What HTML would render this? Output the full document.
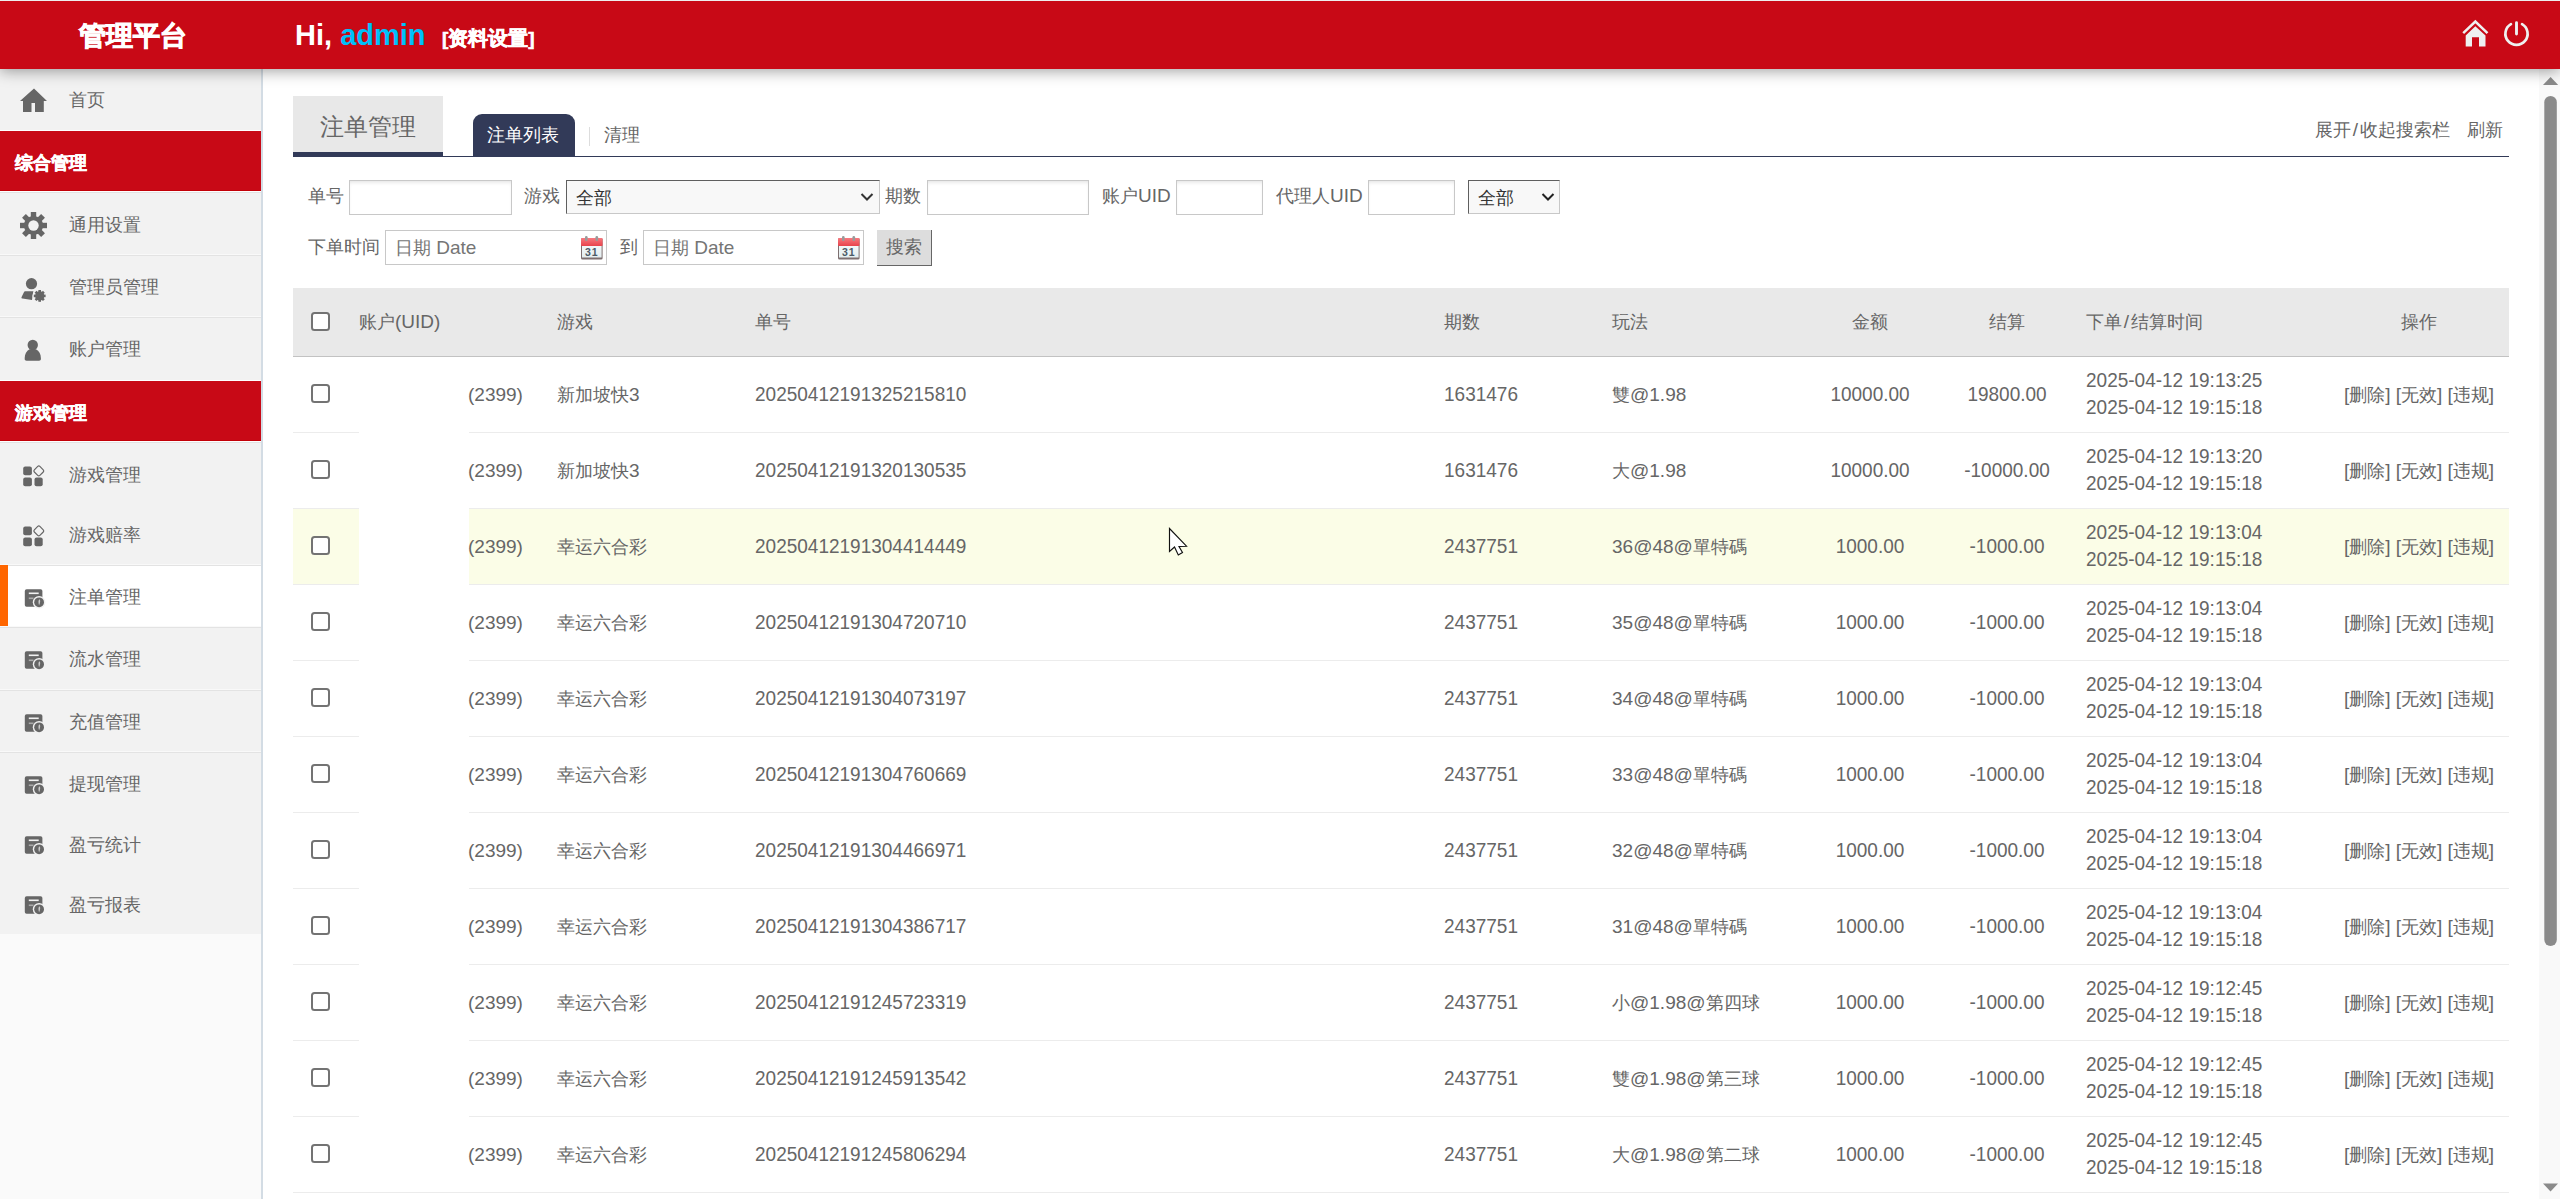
<!DOCTYPE html>
<html><head><meta charset="utf-8">
<style>
*{box-sizing:border-box;margin:0;padding:0}
html,body{width:2560px;height:1199px;overflow:hidden;background:#fff;font-family:"Liberation Sans",sans-serif;color:#666}
.a{position:absolute;white-space:nowrap}
svg{display:block}
#top{position:absolute;left:0;top:0;width:2560px;height:69px;background:#c80916;border-top:1px solid #eee;box-shadow:0 2px 14px rgba(0,0,0,.38);z-index:5}
#side{position:absolute;left:0;top:69px;width:261px;height:1130px;background:#fafafa}
#sideb{position:absolute;left:261px;top:69px;width:2px;height:1130px;background:#d3dce4;z-index:2}
.mi{position:absolute;left:0;width:261px;background:#f2f2f2;font-size:19.5px;color:#666}
.mi .t{position:absolute;left:69px}
.mi .ic{position:absolute}
.mh{position:absolute;left:0;width:261px;background:#c80916;color:#fff;font-weight:bold;font-size:19px}
.mh .t{position:absolute;left:15px;top:1.5px !important;-webkit-text-stroke:0.5px #fff}
.ln{position:absolute;left:0;width:261px;height:1px;background:#e2e2e2}
.wl{position:absolute;left:0;width:261px;height:1px;background:#fff}
.tx{font-size:19px;color:#666;line-height:27px}
.ctr{text-align:center}
.sy{transform:scaleY(1.075);transform-origin:0 20px}
.chk{position:absolute;width:19.4px;height:19.4px;border:2px solid #737373;border-radius:3.5px;background:#fff}
.inp{position:absolute;height:35px;border:1px solid #c8c8c8;background:#fff;box-shadow:inset 0 3px 4px -2px rgba(0,0,0,.13)}
.sel{position:absolute;height:34px;border:1px solid #c8c8c8;border-top:1.5px solid #5f5f5f;border-left:1.5px solid #5f5f5f;background:#f8f8f8}
</style></head><body>

<div id="top">
<div class="a" style="left:79px;top:17px;font-size:26.8px;font-weight:bold;color:#fff;line-height:36px;-webkit-text-stroke:0.9px #fff">管理平台</div>
<div class="a" style="left:295px;top:16px;font-size:29px;font-weight:bold;color:#fff;line-height:36px">Hi, <span style="color:#00c0fa">admin</span></div>
<div class="a" style="left:442px;top:22px;font-size:19px;font-weight:bold;color:#fff;line-height:30px;-webkit-text-stroke:0.6px #fff">[<span style="font-size:19.5px">资料设置</span>]</div>
<svg class="a" style="left:2455px;top:12px" width="80" height="40" viewBox="2455 12 80 40"><path d="M2463.2 32.2 L2475.35 20.6 L2487.5 32.2" stroke="#eef0f0" stroke-width="2.5" fill="none"/><path d="M2475.35 25.3 L2485.5 34.6 L2485.5 45.5 L2479 45.5 L2479 36.2 L2472 36.2 L2472 45.5 L2465.7 45.5 L2465.7 34.6 Z" fill="#eef0f0"/><path d="M2510.95 23.2 A11.1 11.1 0 1 0 2522.05 23.2" stroke="#eef0f0" stroke-width="2.7" fill="none" stroke-linecap="round"/><path d="M2516.5 21.6 L2516.5 33.0" stroke="#eef0f0" stroke-width="2.9" stroke-linecap="round"/></svg>
</div>
<div id="side"></div><div id="sideb"></div>
<div class="mi" style="top:69px;height:61px;background:#f2f2f2"><div class="ic" style="left:20px;top:19px"><svg width="28" height="26" viewBox="0 0 28 26"><path d="M14 0.5 L27 13 L23.8 13 L23.8 24 L15 24 L15 15 L11.5 15 L11.5 24 L3 24 L3 13 L0 13 Z" fill="#666"/></svg></div><div class="t" style="top:0;line-height:61px"><span style="font-size:18px">首页</span></div></div>
<div class="ln" style="top:130px;background:#fff"></div>
<div class="ln" style="top:190px;background:#c30008;z-index:1"></div>
<div class="mh" style="top:131px;height:60px"><div class="t" style="top:0;line-height:60px"><span style="font-size:18px">综合管理</span></div></div>
<div class="ln" style="top:191px;background:#fff"></div>
<div class="ln" style="top:192px;background:#e3e3e3"></div>
<div class="mi" style="top:193px;height:62px;background:#f2f2f2"><div class="ic" style="left:0px;top:0px"></div><div class="t" style="top:0;line-height:62px"></div></div>
<svg class="a" style="left:18px;top:210px" width="31" height="31" viewBox="18 210 31 31"><circle cx="33.5" cy="225.5" r="9.6" fill="#666"/><rect x="30.8" y="212.0" width="5.4" height="13.5" fill="#666" transform="rotate(0.0 33.5 225.5)"/><rect x="30.8" y="212.0" width="5.4" height="13.5" fill="#666" transform="rotate(45.0 33.5 225.5)"/><rect x="30.8" y="212.0" width="5.4" height="13.5" fill="#666" transform="rotate(90.0 33.5 225.5)"/><rect x="30.8" y="212.0" width="5.4" height="13.5" fill="#666" transform="rotate(135.0 33.5 225.5)"/><rect x="30.8" y="212.0" width="5.4" height="13.5" fill="#666" transform="rotate(180.0 33.5 225.5)"/><rect x="30.8" y="212.0" width="5.4" height="13.5" fill="#666" transform="rotate(225.0 33.5 225.5)"/><rect x="30.8" y="212.0" width="5.4" height="13.5" fill="#666" transform="rotate(270.0 33.5 225.5)"/><rect x="30.8" y="212.0" width="5.4" height="13.5" fill="#666" transform="rotate(315.0 33.5 225.5)"/><circle cx="33.5" cy="225.5" r="5.2" fill="#f2f2f2"/></svg>
<div class="ln" style="top:254px;background:#f9f9f9"></div>
<div class="ln" style="top:255px;background:#e3e3e3"></div>
<div class="mi" style="top:256px;height:61px;background:#f2f2f2"><div class="ic" style="left:0px;top:0px"></div><div class="t" style="top:0;line-height:61px"></div></div>
<svg class="a" style="left:18px;top:274px" width="30" height="30" viewBox="18 274 30 30"><circle cx="31.5" cy="283.7" r="5.6" fill="#666"/><path d="M25.5 291.2 L33.4 291.2 L32 300 L22.5 298.6 C21.5 298.4 21.3 297.8 21.6 297 L23.8 292.5 C24.2 291.6 24.7 291.2 25.5 291.2 Z" fill="#666"/><circle cx="39.7" cy="295.9" r="7.3" fill="#f2f2f2"/><circle cx="39.7" cy="295.9" r="4.6" fill="#666"/><rect x="38.400000000000006" y="290.0" width="2.6" height="5.9" fill="#666" transform="rotate(0.0 39.7 295.9)"/><rect x="38.400000000000006" y="290.0" width="2.6" height="5.9" fill="#666" transform="rotate(45.0 39.7 295.9)"/><rect x="38.400000000000006" y="290.0" width="2.6" height="5.9" fill="#666" transform="rotate(90.0 39.7 295.9)"/><rect x="38.400000000000006" y="290.0" width="2.6" height="5.9" fill="#666" transform="rotate(135.0 39.7 295.9)"/><rect x="38.400000000000006" y="290.0" width="2.6" height="5.9" fill="#666" transform="rotate(180.0 39.7 295.9)"/><rect x="38.400000000000006" y="290.0" width="2.6" height="5.9" fill="#666" transform="rotate(225.0 39.7 295.9)"/><rect x="38.400000000000006" y="290.0" width="2.6" height="5.9" fill="#666" transform="rotate(270.0 39.7 295.9)"/><rect x="38.400000000000006" y="290.0" width="2.6" height="5.9" fill="#666" transform="rotate(315.0 39.7 295.9)"/></svg>
<div class="ln" style="top:316px;background:#f9f9f9"></div>
<div class="ln" style="top:317px;background:#e3e3e3"></div>
<div class="mi" style="top:318px;height:62px;background:#f2f2f2"><div class="ic" style="left:0px;top:0px"></div><div class="t" style="top:0;line-height:62px"></div></div>
<svg class="a" style="left:20px;top:336px" width="26" height="28" viewBox="20 336 26 28"><circle cx="32.75" cy="345" r="5.2" fill="#666"/><path d="M29.5 349.3 L36 349.3 C39 351 40.9 354 40.9 358 L40.9 359 C40.9 360.2 40.2 360.7 39 360.7 L26.6 360.7 C25.4 360.7 24.7 360.2 24.7 359 L24.7 358 C24.7 354 26.5 351 29.5 349.3 Z" fill="#666"/></svg>
<div class="ln" style="top:380px;background:#fff"></div>
<div class="ln" style="top:440px;background:#c30008;z-index:1"></div>
<div class="mh" style="top:381px;height:60px"><div class="t" style="top:0;line-height:60px"><span style="font-size:18px">游戏管理</span></div></div>
<div class="ln" style="top:441px;background:#fff"></div>
<div class="ln" style="top:442px;background:#e3e3e3"></div>
<div class="mi" style="top:443px;height:121px;background:#f2f2f2"><div class="ic" style="left:0px;top:0px"></div><div class="t" style="top:0;line-height:121px"></div></div>
<svg class="a" style="left:20px;top:462px" width="26" height="28" viewBox="20 462 26 28"><rect x="23.2" y="466.4" width="8.7" height="8.9" rx="2" fill="#666"/><rect x="23.2" y="477.4" width="8.7" height="8.8" rx="2" fill="#666"/><rect x="34.5" y="477.4" width="8.2" height="8.8" rx="2" fill="#666"/><rect x="34.9" y="467.0" width="7.8" height="7.8" rx="1.5" fill="none" stroke="#666" stroke-width="1.2" transform="rotate(45 38.8 470.9)"/></svg>
<svg class="a" style="left:20px;top:522px" width="26" height="28" viewBox="20 522 26 28"><rect x="23.2" y="526.4" width="8.7" height="8.9" rx="2" fill="#666"/><rect x="23.2" y="537.4" width="8.7" height="8.8" rx="2" fill="#666"/><rect x="34.5" y="537.4" width="8.2" height="8.8" rx="2" fill="#666"/><rect x="34.9" y="527.0" width="7.8" height="7.8" rx="1.5" fill="none" stroke="#666" stroke-width="1.2" transform="rotate(45 38.8 530.9)"/></svg>
<div class="ln" style="top:564px;background:#f9f9f9"></div>
<div class="ln" style="top:565px;background:#e3e3e3"></div>
<div class="mi" style="top:566px;height:61px;background:#fff"><div class="ic" style="left:0px;top:0px"></div><div class="t" style="top:0;line-height:61px"></div></div>
<div class="a" style="left:0;top:565px;width:8px;height:61px;background:#ff6600"></div>
<div class="ln" style="top:626px;background:#f9f9f9"></div>
<div class="ln" style="top:627px;background:#e3e3e3"></div>
<div class="mi" style="top:628px;height:62px;background:#f2f2f2"><div class="ic" style="left:0px;top:0px"></div><div class="t" style="top:0;line-height:62px"></div></div>
<div class="ln" style="top:689px;background:#f9f9f9"></div>
<div class="ln" style="top:690px;background:#e3e3e3"></div>
<div class="mi" style="top:691px;height:61px;background:#f2f2f2"><div class="ic" style="left:0px;top:0px"></div><div class="t" style="top:0;line-height:61px"></div></div>
<div class="ln" style="top:751px;background:#f9f9f9"></div>
<div class="ln" style="top:752px;background:#e3e3e3"></div>
<div class="mi" style="top:753px;height:181px;background:#f2f2f2"><div class="ic" style="left:0px;top:0px"></div><div class="t" style="top:0;line-height:181px"></div></div>
<svg class="a" style="left:22px;top:586px" width="24" height="24" viewBox="22 586 24 24"><rect x="24.8" y="589.3" width="17.6" height="17.5" rx="1.8" fill="#666"/><rect x="28.8" y="592.5" width="9.9" height="1.6" fill="#f2f2f2"/><rect x="28.8" y="597.5" width="4.7" height="1.6" fill="#aaa"/><circle cx="39.1" cy="602.3" r="6.3" fill="#f2f2f2"/><circle cx="39.1" cy="602.3" r="4.9" fill="#666"/><path d="M39.4 599.3 C40.6 599.8 40.4 602.5 39.1 605.3 C38.2 603.0999999999999 38.2 600.3 39.4 599.3 Z" fill="#ccc"/></svg>
<svg class="a" style="left:22px;top:647.7px" width="24" height="24" viewBox="22 647.7 24 24"><rect x="24.8" y="651.0" width="17.6" height="17.5" rx="1.8" fill="#666"/><rect x="28.8" y="654.2" width="9.9" height="1.6" fill="#f2f2f2"/><rect x="28.8" y="659.2" width="4.7" height="1.6" fill="#aaa"/><circle cx="39.1" cy="664.0" r="6.3" fill="#f2f2f2"/><circle cx="39.1" cy="664.0" r="4.9" fill="#666"/><path d="M39.4 661.0 C40.6 661.5 40.4 664.2 39.1 667.0 C38.2 664.8 38.2 662.0 39.4 661.0 Z" fill="#ccc"/></svg>
<svg class="a" style="left:22px;top:711px" width="24" height="24" viewBox="22 711 24 24"><rect x="24.8" y="714.3" width="17.6" height="17.5" rx="1.8" fill="#666"/><rect x="28.8" y="717.5" width="9.9" height="1.6" fill="#f2f2f2"/><rect x="28.8" y="722.5" width="4.7" height="1.6" fill="#aaa"/><circle cx="39.1" cy="727.3" r="6.3" fill="#f2f2f2"/><circle cx="39.1" cy="727.3" r="4.9" fill="#666"/><path d="M39.4 724.3 C40.6 724.8 40.4 727.5 39.1 730.3 C38.2 728.0999999999999 38.2 725.3 39.4 724.3 Z" fill="#ccc"/></svg>
<svg class="a" style="left:22px;top:773px" width="24" height="24" viewBox="22 773 24 24"><rect x="24.8" y="776.3" width="17.6" height="17.5" rx="1.8" fill="#666"/><rect x="28.8" y="779.5" width="9.9" height="1.6" fill="#f2f2f2"/><rect x="28.8" y="784.5" width="4.7" height="1.6" fill="#aaa"/><circle cx="39.1" cy="789.3" r="6.3" fill="#f2f2f2"/><circle cx="39.1" cy="789.3" r="4.9" fill="#666"/><path d="M39.4 786.3 C40.6 786.8 40.4 789.5 39.1 792.3 C38.2 790.0999999999999 38.2 787.3 39.4 786.3 Z" fill="#ccc"/></svg>
<svg class="a" style="left:22px;top:833.1px" width="24" height="24" viewBox="22 833.1 24 24"><rect x="24.8" y="836.4" width="17.6" height="17.5" rx="1.8" fill="#666"/><rect x="28.8" y="839.6" width="9.9" height="1.6" fill="#f2f2f2"/><rect x="28.8" y="844.6" width="4.7" height="1.6" fill="#aaa"/><circle cx="39.1" cy="849.4" r="6.3" fill="#f2f2f2"/><circle cx="39.1" cy="849.4" r="4.9" fill="#666"/><path d="M39.4 846.4 C40.6 846.9 40.4 849.6 39.1 852.4 C38.2 850.1999999999999 38.2 847.4 39.4 846.4 Z" fill="#ccc"/></svg>
<svg class="a" style="left:22px;top:893.4px" width="24" height="24" viewBox="22 893.4 24 24"><rect x="24.8" y="896.6999999999999" width="17.6" height="17.5" rx="1.8" fill="#666"/><rect x="28.8" y="899.9" width="9.9" height="1.6" fill="#f2f2f2"/><rect x="28.8" y="904.9" width="4.7" height="1.6" fill="#aaa"/><circle cx="39.1" cy="909.6999999999999" r="6.3" fill="#f2f2f2"/><circle cx="39.1" cy="909.6999999999999" r="4.9" fill="#666"/><path d="M39.4 906.6999999999999 C40.6 907.1999999999999 40.4 909.9 39.1 912.6999999999999 C38.2 910.4999999999999 38.2 907.6999999999999 39.4 906.6999999999999 Z" fill="#ccc"/></svg>
<div class="a" style="left:69px;top:212.5px;font-size:18px;line-height:24px;color:#666">通用设置</div>
<div class="a" style="left:69px;top:274.5px;font-size:18px;line-height:24px;color:#666">管理员管理</div>
<div class="a" style="left:69px;top:336.5px;font-size:18px;line-height:24px;color:#666">账户管理</div>
<div class="a" style="left:69px;top:462.5px;font-size:18px;line-height:24px;color:#666">游戏管理</div>
<div class="a" style="left:69px;top:522.9px;font-size:18px;line-height:24px;color:#666">游戏赔率</div>
<div class="a" style="left:69px;top:584.5px;font-size:18px;line-height:24px;color:#666">注单管理</div>
<div class="a" style="left:69px;top:647.2px;font-size:18px;line-height:24px;color:#666">流水管理</div>
<div class="a" style="left:69px;top:709.8px;font-size:18px;line-height:24px;color:#666">充值管理</div>
<div class="a" style="left:69px;top:772.3px;font-size:18px;line-height:24px;color:#666">提现管理</div>
<div class="a" style="left:69px;top:832.8px;font-size:18px;line-height:24px;color:#666">盈亏统计</div>
<div class="a" style="left:69px;top:893.3px;font-size:18px;line-height:24px;color:#666">盈亏报表</div>
<div class="a" style="left:293px;top:96px;width:150px;height:56px;background:#e8e8e8"></div>
<div class="a" style="left:293px;top:152px;width:150px;height:5px;background:#323a58"></div>
<div class="a" style="left:293px;top:156px;width:2216px;height:1px;background:#323a58"></div>
<div class="a" style="left:320px;top:110.5px;font-size:24px;line-height:32px;color:#666">注单管理</div>
<div class="a" style="left:473px;top:114px;width:102px;height:43px;background:#323a58;border-radius:9px 9px 0 0"></div>
<div class="a" style="left:487px;top:121px;font-size:18px;line-height:28px;color:#fff">注单列表</div>
<div class="a" style="left:589px;top:127px;width:1px;height:19px;background:#ddd"></div>
<div class="a" style="left:604px;top:121px;font-size:18px;line-height:28px;color:#666">清理</div>
<div class="a" style="left:2315px;top:116px;font-size:19px;line-height:28px;color:#666"><span style="font-size:18px">展开</span><span style="margin:0 1.7px">/</span><span style="font-size:18px">收起搜索栏</span></div>
<div class="a" style="left:2467px;top:116px;font-size:18px;line-height:28px;color:#666">刷新</div>
<div class="a tx" style="left:308px;top:182px;font-size:19px"><span style="font-size:18px">单号</span></div>
<div class="inp" style="left:349px;top:180px;width:163px"></div>
<div class="a tx" style="left:524px;top:182px;font-size:19px"><span style="font-size:18px">游戏</span></div>
<div class="sel" style="left:566px;top:180px;width:314px"><div class="a tx" style="left:9px;top:3.5px;color:#333;font-size:18px">全部</div><svg class="a" style="left:292.5px;top:11px" width="14" height="10" viewBox="0 0 14 10"><path d="M1.5 2 L7 7.5 L12.5 2" stroke="#333" stroke-width="2" fill="none"/></svg></div>
<div class="a tx" style="left:885px;top:182px;font-size:19px"><span style="font-size:18px">期数</span></div>
<div class="inp" style="left:927px;top:180px;width:162px"></div>
<div class="a tx" style="left:1102px;top:182px;font-size:19px"><span style="font-size:18px">账户</span>UID</div>
<div class="inp" style="left:1176px;top:180px;width:87px"></div>
<div class="a tx" style="left:1276px;top:182px;font-size:19px"><span style="font-size:18px">代理人</span>UID</div>
<div class="inp" style="left:1368px;top:180px;width:87px"></div>
<div class="sel" style="left:1468px;top:180px;width:92px"><div class="a tx" style="left:9px;top:3.5px;color:#333;font-size:18px">全部</div><svg class="a" style="left:71.5px;top:11px" width="14" height="10" viewBox="0 0 14 10"><path d="M1.5 2 L7 7.5 L12.5 2" stroke="#222" stroke-width="2" fill="none"/></svg></div>
<div class="a tx" style="left:308px;top:233px;font-size:19px"><span style="font-size:18px">下单时间</span></div>
<div class="inp" style="left:385px;top:230px;width:222px;height:35px;box-shadow:none"><div class="a tx" style="left:9px;top:3px;color:#757575"><span style="font-size:18px">日期</span> Date</div><div class="a" style="left:194px;top:5px"><svg width="24" height="26" viewBox="0 0 24 26"><defs><linearGradient id="cr" x1="0" y1="0" x2="0" y2="1"><stop offset="0" stop-color="#f77a80"/><stop offset="1" stop-color="#e8434c"/></linearGradient><linearGradient id="cb" x1="0" y1="0" x2="0" y2="1"><stop offset="0" stop-color="#fdfdfd"/><stop offset="1" stop-color="#e4eef0"/></linearGradient></defs><rect x="1" y="2" width="21.6" height="21.5" rx="1.5" fill="#7d6f70"/><rect x="2" y="2" width="19.6" height="19.5" fill="url(#cb)"/><rect x="1" y="2" width="21.6" height="8" rx="1" fill="url(#cr)"/><rect x="5" y="0" width="2.6" height="5" rx="1.2" fill="#9a9a9a"/><rect x="15.5" y="0" width="2.6" height="5" rx="1.2" fill="#9a9a9a"/><text x="11.8" y="19.5" font-size="10.5" font-family="Liberation Sans" text-anchor="middle" fill="#4b5a66" font-weight="bold" letter-spacing="1">31</text></svg></div></div>
<div class="a tx" style="left:620px;top:233px;font-size:19px"><span style="font-size:18px">到</span></div>
<div class="inp" style="left:643px;top:230px;width:221px;height:35px;box-shadow:none"><div class="a tx" style="left:9px;top:3px;color:#757575"><span style="font-size:18px">日期</span> Date</div><div class="a" style="left:193px;top:5px"><svg width="24" height="26" viewBox="0 0 24 26"><defs><linearGradient id="cr" x1="0" y1="0" x2="0" y2="1"><stop offset="0" stop-color="#f77a80"/><stop offset="1" stop-color="#e8434c"/></linearGradient><linearGradient id="cb" x1="0" y1="0" x2="0" y2="1"><stop offset="0" stop-color="#fdfdfd"/><stop offset="1" stop-color="#e4eef0"/></linearGradient></defs><rect x="1" y="2" width="21.6" height="21.5" rx="1.5" fill="#7d6f70"/><rect x="2" y="2" width="19.6" height="19.5" fill="url(#cb)"/><rect x="1" y="2" width="21.6" height="8" rx="1" fill="url(#cr)"/><rect x="5" y="0" width="2.6" height="5" rx="1.2" fill="#9a9a9a"/><rect x="15.5" y="0" width="2.6" height="5" rx="1.2" fill="#9a9a9a"/><text x="11.8" y="19.5" font-size="10.5" font-family="Liberation Sans" text-anchor="middle" fill="#4b5a66" font-weight="bold" letter-spacing="1">31</text></svg></div></div>
<div class="a" style="left:877px;top:230px;width:55px;height:36px;background:#dddddd;border-right:1.5px solid #666;border-bottom:1.5px solid #666"></div>
<div class="a tx" style="left:886px;top:234px;color:#666;font-size:18px">搜索</div>
<div class="a" style="left:293px;top:288px;width:2216px;height:69px;background:#e9e9e9;border-bottom:1px solid #c2c2c2"></div>
<div class="chk" style="left:311px;top:312px"></div>
<div class="a tx" style="left:359px;top:308px"><span style="font-size:18px">账户</span>(UID)</div>
<div class="a tx" style="left:557px;top:308px"><span style="font-size:18px">游戏</span></div>
<div class="a tx" style="left:755px;top:308px"><span style="font-size:18px">单号</span></div>
<div class="a tx" style="left:1444px;top:308px"><span style="font-size:18px">期数</span></div>
<div class="a tx" style="left:1612px;top:308px"><span style="font-size:18px">玩法</span></div>
<div class="a tx" style="left:2086px;top:308px"><span style="font-size:18px">下单</span><span style="margin:0 1.7px">/</span><span style="font-size:18px">结算时间</span></div>
<div class="a tx ctr" style="left:1770px;top:308px;width:200px"><span style="font-size:18px">金额</span></div>
<div class="a tx ctr" style="left:1907px;top:308px;width:200px"><span style="font-size:18px">结算</span></div>
<div class="a tx ctr" style="left:2319px;top:308px;width:200px"><span style="font-size:18px">操作</span></div>
<div class="a" style="left:293px;top:432px;width:66px;height:1px;background:#ececec"></div>
<div class="a" style="left:469px;top:432px;width:2040px;height:1px;background:#ececec"></div>
<div class="chk" style="left:311px;top:384px"></div>
<div class="a tx" style="left:468px;top:381px">(2399)</div>
<div class="a tx" style="left:557px;top:381px"><span style="font-size:18px">新加坡快</span>3</div>
<div class="a tx sy" style="left:755px;top:381px">20250412191325215810</div>
<div class="a tx sy" style="left:1444px;top:381px">1631476</div>
<div class="a tx" style="left:1612px;top:381px"><span style="font-size:18px">雙</span>@1.98</div>
<div class="a tx ctr sy" style="left:1770px;top:381px;width:200px">10000.00</div>
<div class="a tx ctr sy" style="left:1907px;top:381px;width:200px">19800.00</div>
<div class="a tx sy" style="left:2086px;top:367px">2025-04-12 19:13:25</div><div class="a tx sy" style="left:2086px;top:394px">2025-04-12 19:15:18</div>
<div class="a tx ctr" style="left:2319px;top:381px;width:200px">[<span style="font-size:18px">删除</span>] [<span style="font-size:18px">无效</span>] [<span style="font-size:18px">违规</span>]</div>
<div class="a" style="left:293px;top:508px;width:66px;height:1px;background:#ececec"></div>
<div class="a" style="left:469px;top:508px;width:2040px;height:1px;background:#ececec"></div>
<div class="chk" style="left:311px;top:460px"></div>
<div class="a tx" style="left:468px;top:457px">(2399)</div>
<div class="a tx" style="left:557px;top:457px"><span style="font-size:18px">新加坡快</span>3</div>
<div class="a tx sy" style="left:755px;top:457px">20250412191320130535</div>
<div class="a tx sy" style="left:1444px;top:457px">1631476</div>
<div class="a tx" style="left:1612px;top:457px"><span style="font-size:18px">大</span>@1.98</div>
<div class="a tx ctr sy" style="left:1770px;top:457px;width:200px">10000.00</div>
<div class="a tx ctr sy" style="left:1907px;top:457px;width:200px">-10000.00</div>
<div class="a tx sy" style="left:2086px;top:443px">2025-04-12 19:13:20</div><div class="a tx sy" style="left:2086px;top:470px">2025-04-12 19:15:18</div>
<div class="a tx ctr" style="left:2319px;top:457px;width:200px">[<span style="font-size:18px">删除</span>] [<span style="font-size:18px">无效</span>] [<span style="font-size:18px">违规</span>]</div>
<div class="a" style="left:293px;top:509px;width:66px;height:75px;background:#fbfde7"></div>
<div class="a" style="left:469px;top:509px;width:2040px;height:75px;background:#fbfde7"></div>
<div class="a" style="left:293px;top:584px;width:66px;height:1px;background:#ececec"></div>
<div class="a" style="left:469px;top:584px;width:2040px;height:1px;background:#ececec"></div>
<div class="chk" style="left:311px;top:536px"></div>
<div class="a tx" style="left:468px;top:533px">(2399)</div>
<div class="a tx" style="left:557px;top:533px"><span style="font-size:18px">幸运六合彩</span></div>
<div class="a tx sy" style="left:755px;top:533px">20250412191304414449</div>
<div class="a tx sy" style="left:1444px;top:533px">2437751</div>
<div class="a tx" style="left:1612px;top:533px">36@48@<span style="font-size:18px">單特碼</span></div>
<div class="a tx ctr sy" style="left:1770px;top:533px;width:200px">1000.00</div>
<div class="a tx ctr sy" style="left:1907px;top:533px;width:200px">-1000.00</div>
<div class="a tx sy" style="left:2086px;top:519px">2025-04-12 19:13:04</div><div class="a tx sy" style="left:2086px;top:546px">2025-04-12 19:15:18</div>
<div class="a tx ctr" style="left:2319px;top:533px;width:200px">[<span style="font-size:18px">删除</span>] [<span style="font-size:18px">无效</span>] [<span style="font-size:18px">违规</span>]</div>
<div class="a" style="left:293px;top:660px;width:66px;height:1px;background:#ececec"></div>
<div class="a" style="left:469px;top:660px;width:2040px;height:1px;background:#ececec"></div>
<div class="chk" style="left:311px;top:612px"></div>
<div class="a tx" style="left:468px;top:609px">(2399)</div>
<div class="a tx" style="left:557px;top:609px"><span style="font-size:18px">幸运六合彩</span></div>
<div class="a tx sy" style="left:755px;top:609px">20250412191304720710</div>
<div class="a tx sy" style="left:1444px;top:609px">2437751</div>
<div class="a tx" style="left:1612px;top:609px">35@48@<span style="font-size:18px">單特碼</span></div>
<div class="a tx ctr sy" style="left:1770px;top:609px;width:200px">1000.00</div>
<div class="a tx ctr sy" style="left:1907px;top:609px;width:200px">-1000.00</div>
<div class="a tx sy" style="left:2086px;top:595px">2025-04-12 19:13:04</div><div class="a tx sy" style="left:2086px;top:622px">2025-04-12 19:15:18</div>
<div class="a tx ctr" style="left:2319px;top:609px;width:200px">[<span style="font-size:18px">删除</span>] [<span style="font-size:18px">无效</span>] [<span style="font-size:18px">违规</span>]</div>
<div class="a" style="left:293px;top:736px;width:66px;height:1px;background:#ececec"></div>
<div class="a" style="left:469px;top:736px;width:2040px;height:1px;background:#ececec"></div>
<div class="chk" style="left:311px;top:688px"></div>
<div class="a tx" style="left:468px;top:685px">(2399)</div>
<div class="a tx" style="left:557px;top:685px"><span style="font-size:18px">幸运六合彩</span></div>
<div class="a tx sy" style="left:755px;top:685px">20250412191304073197</div>
<div class="a tx sy" style="left:1444px;top:685px">2437751</div>
<div class="a tx" style="left:1612px;top:685px">34@48@<span style="font-size:18px">單特碼</span></div>
<div class="a tx ctr sy" style="left:1770px;top:685px;width:200px">1000.00</div>
<div class="a tx ctr sy" style="left:1907px;top:685px;width:200px">-1000.00</div>
<div class="a tx sy" style="left:2086px;top:671px">2025-04-12 19:13:04</div><div class="a tx sy" style="left:2086px;top:698px">2025-04-12 19:15:18</div>
<div class="a tx ctr" style="left:2319px;top:685px;width:200px">[<span style="font-size:18px">删除</span>] [<span style="font-size:18px">无效</span>] [<span style="font-size:18px">违规</span>]</div>
<div class="a" style="left:293px;top:812px;width:66px;height:1px;background:#ececec"></div>
<div class="a" style="left:469px;top:812px;width:2040px;height:1px;background:#ececec"></div>
<div class="chk" style="left:311px;top:764px"></div>
<div class="a tx" style="left:468px;top:761px">(2399)</div>
<div class="a tx" style="left:557px;top:761px"><span style="font-size:18px">幸运六合彩</span></div>
<div class="a tx sy" style="left:755px;top:761px">20250412191304760669</div>
<div class="a tx sy" style="left:1444px;top:761px">2437751</div>
<div class="a tx" style="left:1612px;top:761px">33@48@<span style="font-size:18px">單特碼</span></div>
<div class="a tx ctr sy" style="left:1770px;top:761px;width:200px">1000.00</div>
<div class="a tx ctr sy" style="left:1907px;top:761px;width:200px">-1000.00</div>
<div class="a tx sy" style="left:2086px;top:747px">2025-04-12 19:13:04</div><div class="a tx sy" style="left:2086px;top:774px">2025-04-12 19:15:18</div>
<div class="a tx ctr" style="left:2319px;top:761px;width:200px">[<span style="font-size:18px">删除</span>] [<span style="font-size:18px">无效</span>] [<span style="font-size:18px">违规</span>]</div>
<div class="a" style="left:293px;top:888px;width:66px;height:1px;background:#ececec"></div>
<div class="a" style="left:469px;top:888px;width:2040px;height:1px;background:#ececec"></div>
<div class="chk" style="left:311px;top:840px"></div>
<div class="a tx" style="left:468px;top:837px">(2399)</div>
<div class="a tx" style="left:557px;top:837px"><span style="font-size:18px">幸运六合彩</span></div>
<div class="a tx sy" style="left:755px;top:837px">20250412191304466971</div>
<div class="a tx sy" style="left:1444px;top:837px">2437751</div>
<div class="a tx" style="left:1612px;top:837px">32@48@<span style="font-size:18px">單特碼</span></div>
<div class="a tx ctr sy" style="left:1770px;top:837px;width:200px">1000.00</div>
<div class="a tx ctr sy" style="left:1907px;top:837px;width:200px">-1000.00</div>
<div class="a tx sy" style="left:2086px;top:823px">2025-04-12 19:13:04</div><div class="a tx sy" style="left:2086px;top:850px">2025-04-12 19:15:18</div>
<div class="a tx ctr" style="left:2319px;top:837px;width:200px">[<span style="font-size:18px">删除</span>] [<span style="font-size:18px">无效</span>] [<span style="font-size:18px">违规</span>]</div>
<div class="a" style="left:293px;top:964px;width:66px;height:1px;background:#ececec"></div>
<div class="a" style="left:469px;top:964px;width:2040px;height:1px;background:#ececec"></div>
<div class="chk" style="left:311px;top:916px"></div>
<div class="a tx" style="left:468px;top:913px">(2399)</div>
<div class="a tx" style="left:557px;top:913px"><span style="font-size:18px">幸运六合彩</span></div>
<div class="a tx sy" style="left:755px;top:913px">20250412191304386717</div>
<div class="a tx sy" style="left:1444px;top:913px">2437751</div>
<div class="a tx" style="left:1612px;top:913px">31@48@<span style="font-size:18px">單特碼</span></div>
<div class="a tx ctr sy" style="left:1770px;top:913px;width:200px">1000.00</div>
<div class="a tx ctr sy" style="left:1907px;top:913px;width:200px">-1000.00</div>
<div class="a tx sy" style="left:2086px;top:899px">2025-04-12 19:13:04</div><div class="a tx sy" style="left:2086px;top:926px">2025-04-12 19:15:18</div>
<div class="a tx ctr" style="left:2319px;top:913px;width:200px">[<span style="font-size:18px">删除</span>] [<span style="font-size:18px">无效</span>] [<span style="font-size:18px">违规</span>]</div>
<div class="a" style="left:293px;top:1040px;width:66px;height:1px;background:#ececec"></div>
<div class="a" style="left:469px;top:1040px;width:2040px;height:1px;background:#ececec"></div>
<div class="chk" style="left:311px;top:992px"></div>
<div class="a tx" style="left:468px;top:989px">(2399)</div>
<div class="a tx" style="left:557px;top:989px"><span style="font-size:18px">幸运六合彩</span></div>
<div class="a tx sy" style="left:755px;top:989px">20250412191245723319</div>
<div class="a tx sy" style="left:1444px;top:989px">2437751</div>
<div class="a tx" style="left:1612px;top:989px"><span style="font-size:18px">小</span>@1.98@<span style="font-size:18px">第四球</span></div>
<div class="a tx ctr sy" style="left:1770px;top:989px;width:200px">1000.00</div>
<div class="a tx ctr sy" style="left:1907px;top:989px;width:200px">-1000.00</div>
<div class="a tx sy" style="left:2086px;top:975px">2025-04-12 19:12:45</div><div class="a tx sy" style="left:2086px;top:1002px">2025-04-12 19:15:18</div>
<div class="a tx ctr" style="left:2319px;top:989px;width:200px">[<span style="font-size:18px">删除</span>] [<span style="font-size:18px">无效</span>] [<span style="font-size:18px">违规</span>]</div>
<div class="a" style="left:293px;top:1116px;width:66px;height:1px;background:#ececec"></div>
<div class="a" style="left:469px;top:1116px;width:2040px;height:1px;background:#ececec"></div>
<div class="chk" style="left:311px;top:1068px"></div>
<div class="a tx" style="left:468px;top:1065px">(2399)</div>
<div class="a tx" style="left:557px;top:1065px"><span style="font-size:18px">幸运六合彩</span></div>
<div class="a tx sy" style="left:755px;top:1065px">20250412191245913542</div>
<div class="a tx sy" style="left:1444px;top:1065px">2437751</div>
<div class="a tx" style="left:1612px;top:1065px"><span style="font-size:18px">雙</span>@1.98@<span style="font-size:18px">第三球</span></div>
<div class="a tx ctr sy" style="left:1770px;top:1065px;width:200px">1000.00</div>
<div class="a tx ctr sy" style="left:1907px;top:1065px;width:200px">-1000.00</div>
<div class="a tx sy" style="left:2086px;top:1051px">2025-04-12 19:12:45</div><div class="a tx sy" style="left:2086px;top:1078px">2025-04-12 19:15:18</div>
<div class="a tx ctr" style="left:2319px;top:1065px;width:200px">[<span style="font-size:18px">删除</span>] [<span style="font-size:18px">无效</span>] [<span style="font-size:18px">违规</span>]</div>
<div class="a" style="left:293px;top:1192px;width:2216px;height:1px;background:#ececec"></div>
<div class="chk" style="left:311px;top:1144px"></div>
<div class="a tx" style="left:468px;top:1141px">(2399)</div>
<div class="a tx" style="left:557px;top:1141px"><span style="font-size:18px">幸运六合彩</span></div>
<div class="a tx sy" style="left:755px;top:1141px">20250412191245806294</div>
<div class="a tx sy" style="left:1444px;top:1141px">2437751</div>
<div class="a tx" style="left:1612px;top:1141px"><span style="font-size:18px">大</span>@1.98@<span style="font-size:18px">第二球</span></div>
<div class="a tx ctr sy" style="left:1770px;top:1141px;width:200px">1000.00</div>
<div class="a tx ctr sy" style="left:1907px;top:1141px;width:200px">-1000.00</div>
<div class="a tx sy" style="left:2086px;top:1127px">2025-04-12 19:12:45</div><div class="a tx sy" style="left:2086px;top:1154px">2025-04-12 19:15:18</div>
<div class="a tx ctr" style="left:2319px;top:1141px;width:200px">[<span style="font-size:18px">删除</span>] [<span style="font-size:18px">无效</span>] [<span style="font-size:18px">违规</span>]</div>
<svg class="a" style="left:1160px;top:520px;z-index:9" width="40" height="45" viewBox="1160 520 40 45"><path d="M1169.5 528.5 L1169.5 551.5 L1174.5 547 L1178.3 555 L1182.5 552.5 L1179 546.5 L1186.5 546.2 Z" fill="#fff" stroke="#111" stroke-width="1.15" stroke-linejoin="miter"/></svg>
<div class="a" style="left:2539px;top:69px;width:21px;height:1130px;background:#f9f9f9"></div>
<svg class="a" style="left:2539px;top:69px" width="21" height="1130" viewBox="0 0 21 1130"><path d="M4 16 L19.2 16 L11.6 8 Z" fill="#8a8a8a"/><rect x="5.3" y="27" width="12.5" height="850" rx="6.25" fill="#8a8a8a"/><path d="M4 1114.5 L19 1114.5 L11.5 1122.5 Z" fill="#8a8a8a"/></svg>
</body></html>
